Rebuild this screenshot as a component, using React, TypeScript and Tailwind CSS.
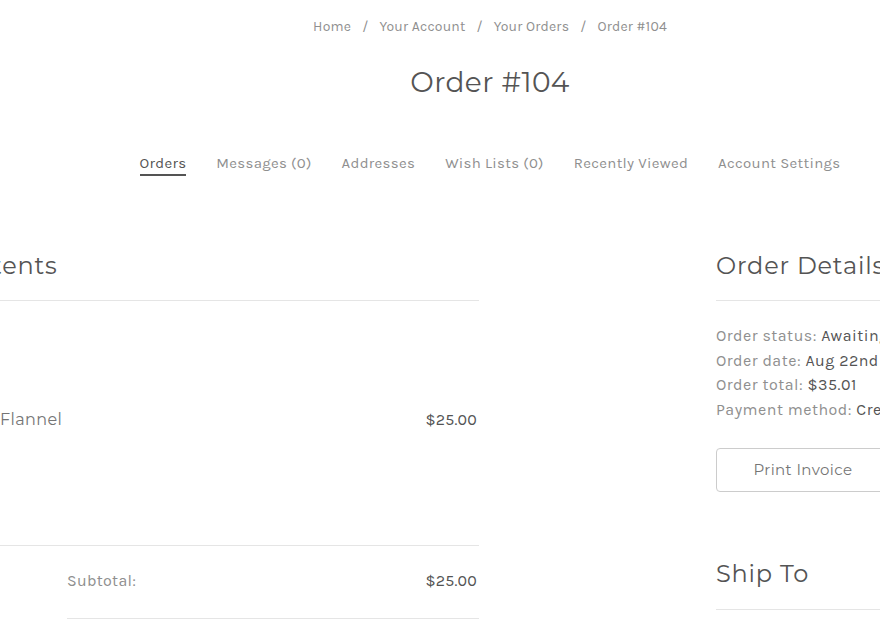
const navItems = ['Orders', 'Messages (0)', 'Addresses', 'Wish Lists (0)', 'Recently Viewed', 'Account Settings'];

const details = [
  { label: 'Order status:', value: 'Awaiting Fulfillment' },
  { label: 'Order date:', value: 'Aug 22nd 2024' },
  { label: 'Order total:', value: '$35.01' },
  { label: 'Payment method:', value: 'Credit Card' },
];

const body = { fontFamily: 'Karla, "Open Sans", sans-serif' };
const heading = { fontFamily: 'Montserrat, "Open Sans", sans-serif' };

export default function App() {
  return (
    <div className="w-[880px] h-[624px] overflow-hidden bg-white">
      <div className="w-[980px] flex flex-col items-center" style={body}>
        <ul className="flex items-center gap-[11px] pt-[18px] text-[14px] leading-[18px] tracking-[0.2px] text-[#8f8f8f]">
          <li>Home</li>
          <li>/</li>
          <li>Your Account</li>
          <li>/</li>
          <li>Your Orders</li>
          <li>/</li>
          <li>Order #104</li>
        </ul>
        <h1 className="mt-[28px] text-[28px] leading-[36px] tracking-[0.4px] text-[#545454]" style={heading}>Order #104</h1>
        <nav className="mt-[53px] flex gap-[30px] text-[15px] leading-[20px] tracking-[0.3px] text-[#8f8f8f]">
          {navItems.map((item, i) => (
            <span key={item} className={i === 0 ? 'text-[#545454] border-b-2 border-[#545454] pb-[1px]' : ''}>
              {item}
            </span>
          ))}
        </nav>
      </div>

      <div className="flex mt-[74px] ml-[-139px]" style={body}>
        <section className="w-[618px] shrink-0">
          <h2 className="text-[24px] leading-[32px] tracking-[0.8px] text-[#545454] pb-[18px] border-b border-[#e5e5e5]" style={heading}>
            Order Contents
          </h2>
          <div className="h-[245px] flex items-center justify-between pl-[139px] pr-[2px] pb-[6px] border-b border-[#e5e5e5]">
            <span className="text-[16px] tracking-[0.4px] text-[#757575]" style={heading}>Flannel</span>
            <span className="text-[16px] tracking-[0.2px] text-[#545454]">$25.00</span>
          </div>
          <div className="ml-[206px] h-[73px] flex items-center justify-between pr-[2px] pb-[3px] border-b border-[#e5e5e5]">
            <span className="text-[16px] tracking-[0.3px] text-[#8f8f8f]">Subtotal:</span>
            <span className="text-[16px] tracking-[0.2px] text-[#545454]">$25.00</span>
          </div>
        </section>

        <aside className="ml-[237px] w-[300px] shrink-0">
          <h2 className="text-[24px] leading-[32px] tracking-[0.8px] text-[#545454] pb-[18px] border-b border-[#e5e5e5]" style={heading}>
            Order Details
          </h2>
          <dl className="mt-[23px] text-[16px] leading-[24.6px] tracking-[0.5px] whitespace-nowrap">
            {details.map(d => (
              <div key={d.label}>
                <span className="text-[#8f8f8f]">{d.label} </span>
                <span className="text-[#545454]">{d.value}</span>
              </div>
            ))}
          </dl>
          <button className="mt-[26px] w-[174px] h-[44px] rounded-[4px] border border-[#cccccc] text-[15px] tracking-[0.4px] text-[#757575]" style={heading}>
            Print Invoice
          </button>
          <h2 className="mt-[66px] text-[24px] leading-[32px] tracking-[0.8px] text-[#545454] pb-[19px] border-b border-[#e5e5e5]" style={heading}>
            Ship To
          </h2>
        </aside>
      </div>
    </div>
  );
}
